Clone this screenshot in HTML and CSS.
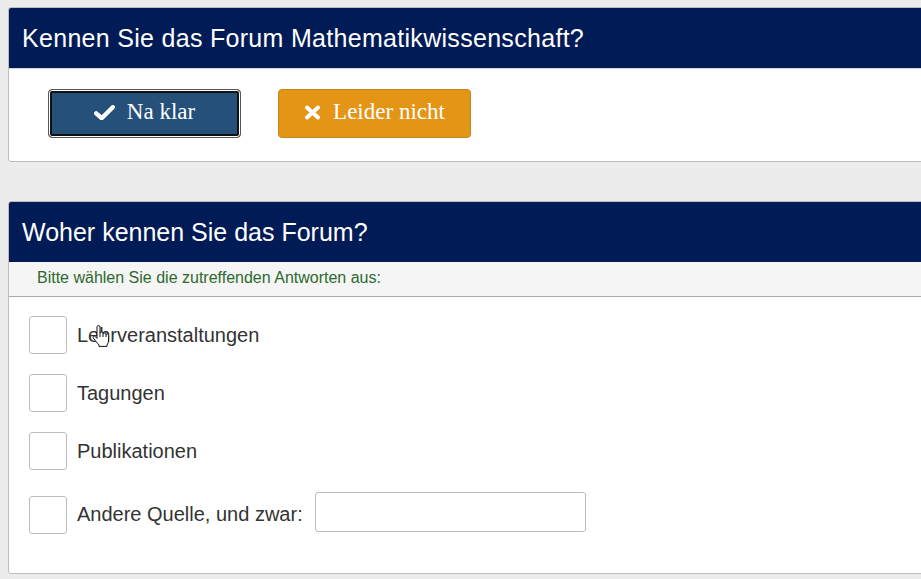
FILE: index.html
```html
<!DOCTYPE html>
<html lang="de">
<head>
<meta charset="utf-8">
<title>Umfrage Forum Mathematikwissenschaft</title>
<link rel="stylesheet" href="styles.css">
</head>
<body>
<main class="page">
  <section class="card">
    <h2 class="card-title">Kennen Sie das Forum Mathematikwissenschaft?</h2>
    <div class="card-body answers">
      <button class="btn btn-yes" type="button">
        <svg class="icon icon-check" viewBox="0 0 21 15" aria-hidden="true">
          <path d="M2.2 8.4 L7.6 13.2 L18.8 2.2" fill="none" stroke="#fff" stroke-width="4.4" stroke-linejoin="round" stroke-linecap="round"/>
        </svg>
        <span>Na klar</span>
      </button>
      <button class="btn btn-no" type="button">
        <svg class="icon icon-times" viewBox="0 0 17 15" aria-hidden="true">
          <path d="M3 2.5 L14 12.5 M14 2.5 L3 12.5" fill="none" stroke="#fff" stroke-width="4" stroke-linecap="round"/>
        </svg>
        <span>Leider nicht</span>
      </button>
    </div>
  </section>

  <section class="card">
    <h2 class="card-title">Woher kennen Sie das Forum?</h2>
    <p class="card-hint">Bitte wählen Sie die zutreffenden Antworten aus:</p>
    <div class="card-body options">
      <label class="option">
        <span class="box"></span>
        <span class="option-text">Lehrveranstaltungen</span>
        <svg class="pointer" viewBox="0 0 18 22" aria-hidden="true">
          <path d="M5 2 Q5 0.6 6.5 0.6 Q8 0.6 8 2 V8.2 Q8 7 9.5 7 Q11 7 11 8.5 V9.2 Q11 8 12.5 8 Q14 8 14 9.5 V10.2 Q14 9 15.3 9 Q16.6 9 16.6 10.5 V15 Q16.6 18 15 20 V21.4 H7 V20 Q5.5 18.5 3.6 16 L1.3 13 Q0.6 12 1.5 11.3 Q2.6 10.6 3.6 11.8 L5 13.4 Z M8 8.2 V12 M11 9.2 V12 M14 10.2 V12" fill="#fff" stroke="#111" stroke-width="1" stroke-linejoin="round"/>
        </svg>
      </label>
      <label class="option">
        <span class="box"></span>
        <span class="option-text">Tagungen</span>
      </label>
      <label class="option">
        <span class="box"></span>
        <span class="option-text">Publikationen</span>
      </label>
      <label class="option option-other">
        <span class="box"></span>
        <span class="option-text">Andere Quelle, und zwar:</span>
        <input class="other-input" type="text">
      </label>
    </div>
  </section>
</main>
</body>
</html>
```
FILE: styles.css
```css
html, body {
  margin: 0;
  padding: 0;
}

body {
  background: #ececec;
  font-family: "Liberation Sans", Arial, sans-serif;
  overflow: hidden;
}

.page {
  padding: 7px 0 0 8px;
  display: flex;
  flex-direction: column;
  gap: 39px;
}

.card {
  width: 960px;
  background: #fff;
  border: 1px solid #bdbdbd;
  border-radius: 3px;
  overflow: hidden;
}

.card-title {
  margin: 0;
  height: 60px;
  line-height: 60px;
  padding-left: 13px;
  background: #001b55;
  color: #fff;
  font-size: 25px;
  font-weight: normal;
}

.card:first-child .card-title {
  border-bottom: 1px solid #d6d6d6;
  letter-spacing: 0.3px;
}

/* Yes / no answer buttons */
.answers {
  display: flex;
  gap: 37px;
  padding: 20px 0 23px 39px;
}

.btn {
  width: 193px;
  height: 49px;
  display: flex;
  align-items: center;
  justify-content: center;
  gap: 12px;
  border-radius: 4px;
  color: #fff;
  font-family: "Liberation Serif", "Times New Roman", serif;
  font-size: 23px;
  cursor: pointer;
  padding: 0 0 3px;
}

.btn-yes {
  background: #245079;
  border: 1px solid #555;
  box-shadow: inset 0 0 0 1px #fff, inset 0 0 0 3px #111;
}

.btn-no {
  background: #e39516;
  border: 1px solid #c8851a;
}

.icon {
  display: block;
  flex: none;
}

.icon-check {
  width: 21px;
  height: 15px;
  margin-top: 1px;
}

.icon-times {
  width: 17px;
  height: 15px;
  margin-top: 1px;
}

/* Checkbox list */
.card-hint {
  margin: 0;
  height: 34px;
  line-height: 32px;
  padding-left: 28px;
  background: #f5f5f5;
  border-bottom: 1px solid #ababab;
  color: #2c6a2c;
  font-size: 16px;
}

.options {
  display: flex;
  flex-direction: column;
  gap: 20px;
  padding: 19px 0 39px 20px;
}

.option {
  position: relative;
  display: flex;
  align-items: center;
  gap: 10px;
  color: #333;
  font-size: 20px;
}

.box {
  width: 36px;
  height: 36px;
  border: 1px solid #bdbdbd;
  border-radius: 3px;
  background: #fff;
  flex: none;
}

.option-other {
  align-items: flex-start;
  margin-top: 2px;
}

.option-other .box {
  margin-top: 4px;
}

.option-other .option-text {
  margin-top: 11px;
}

.other-input {
  margin-left: 2px;
  width: 269px;
  height: 38px;
  box-sizing: content-box;
  padding: 0;
  border: 1px solid #bdbdbd;
  border-radius: 3px;
  font-size: 18px;
}

/* mouse pointer resting over the first option */
.pointer {
  position: absolute;
  left: 63px;
  top: 9px;
  width: 18px;
  height: 22px;
}
```
